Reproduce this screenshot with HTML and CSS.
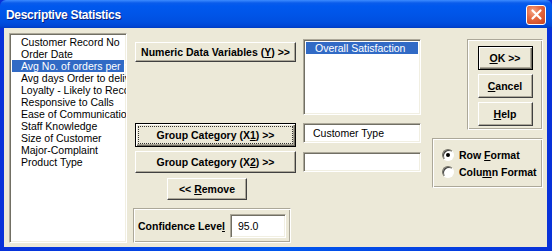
FILE: index.html
```html
<!DOCTYPE html>
<html>
<head>
<meta charset="utf-8">
<link rel="stylesheet" href="styles.css">
</head>
<body>
<div class="window">
  <div class="titlebar">
    <span class="title">Descriptive Statistics</span>
    <span class="close"><svg width="13" height="13" viewBox="0 0 13 13"><path d="M2.5 2.5 L10.5 10.5 M10.5 2.5 L2.5 10.5" stroke="#fff" stroke-width="2.2" stroke-linecap="round"/></svg></span>
  </div>
  <div class="content">
    <div class="col col-a">
      <div class="listbox vars">
        <div class="item">Customer Record No</div>
        <div class="item">Order Date</div>
        <div class="item sel">Avg No. of orders per month</div>
        <div class="item">Avg days Order to delivery</div>
        <div class="item">Loyalty - Likely to Recommend</div>
        <div class="item">Responsive to Calls</div>
        <div class="item">Ease of Communications</div>
        <div class="item">Staff Knowledge</div>
        <div class="item">Size of Customer</div>
        <div class="item">Major-Complaint</div>
        <div class="item">Product Type</div>
      </div>
    </div>
    <div class="col col-b">
      <div class="btn btn-numeric"><span>Numeric Data Variables (<u>Y</u>) &gt;&gt;</span></div>
      <div class="btn btn-x1 focus"><span>Group Category (X<u>1</u>) &gt;&gt;</span></div>
      <div class="btn btn-x2"><span>Group Category (X<u>2</u>) &gt;&gt;</span></div>
      <div class="btn btn-remove"><span>&lt;&lt; <u>R</u>emove</span></div>
      <div class="frame conf">
        <span class="label">Confidence Leve<u>l</u></span>
        <div class="textbox conf-box">95.0</div>
      </div>
    </div>
    <div class="col col-c">
      <div class="listbox out">
        <div class="item sel">Overall Satisfaction</div>
      </div>
      <div class="textbox tb1">Customer Type</div>
      <div class="textbox tb2"></div>
    </div>
    <div class="col col-d">
      <div class="frame actions">
        <div class="btn act default"><span><u>O</u>K &gt;&gt;</span></div>
        <div class="btn act"><span><u>C</u>ancel</span></div>
        <div class="btn act"><span><u>H</u>elp</span></div>
      </div>
      <div class="frame format">
        <div class="radio-row"><span class="radio on"></span><span class="rl">Row <u>F</u>ormat</span></div>
        <div class="radio-row"><span class="radio"></span><span class="rl">Colu<u>m</u>n Format</span></div>
      </div>
    </div>
  </div>
</div>
</body>
</html>
```

FILE: styles.css
```css
* { box-sizing: border-box; }
html, body { margin: 0; padding: 0; }
body { width: 552px; height: 251px; overflow: hidden; background: #0831D9; }

.window {
  width: 552px;
  height: 251px;
  display: flex;
  flex-direction: column;
  background: linear-gradient(to right, #0831D9, #0058EE 50%, #0831D9);
  font-family: "Liberation Sans", Arial, sans-serif;
  font-size: 10.5px;
  color: #000;
}

.titlebar {
  height: 28px;
  flex: none;
  display: flex;
  align-items: center;
  justify-content: space-between;
  padding: 0 6px 0 6px;
  background: linear-gradient(to bottom, #3D8BFF 0, #0A5CEB 3px, #0058EE 6px, #0055E8 14px, #004FE0 22px, #0046D5 26px, #003CC2 28px);
  border-radius: 6px 6px 0 0;
}
.title {
  color: #fff;
  font-weight: bold;
  font-size: 12px;
  letter-spacing: -0.3px;
  text-shadow: 1px 1px 0 #0A1E7A;
  margin-top: 1px;
}
.close {
  width: 20px;
  height: 20px;
  margin-top: 1px;
  border: 1px solid #fff;
  border-radius: 3px;
  background: radial-gradient(circle at 35% 30%, #F5A585 0, #E56B43 40%, #C8401B 100%);
  display: flex;
  align-items: center;
  justify-content: center;
}

.content {
  flex: 1;
  margin: 0 5px 4px 4px;
  background: #ECE9D8;
  display: flex;
  align-items: flex-start;
}

.col { display: flex; flex-direction: column; align-items: flex-start; }
.col-a { width: 118px; margin: 5px 0 0 5px; }
.col-b { width: 163px; margin-left: 6px; }
.col-c { width: 118px; margin-left: 7px; }
.col-d { width: 111px; margin-left: 11px; }

.listbox {
  background: #fff;
  border: 1px solid;
  border-color: #ACA899 #fff #fff #ACA899;
  box-shadow: inset 1px 1px #716F64, inset -1px -1px #F1EFE2;
  padding: 2px 2px;
  overflow: hidden;
  white-space: nowrap;
}
.vars { width: 118px; height: 210px; padding-top: 2px; }
.out { width: 118px; height: 76px; margin-top: 11px; }
.item { height: 12px; line-height: 12px; padding-left: 9px; }
.item.sel { background: #316AC5; color: #fff; }

.btn {
  background: #ECE9D8;
  border: 1px solid;
  border-color: #fff #404040 #404040 #fff;
  box-shadow: inset -1px -1px #ACA899;
  font-weight: bold;
  display: flex;
  align-items: center;
  justify-content: center;
  white-space: nowrap;
}
.btn.focus, .btn.default {
  border: 1px solid #000;
  box-shadow: inset 1px 1px #fff, inset -1px -1px #716F64, inset -2px -2px #ACA899;
}
.btn.focus { outline: 1px dotted #333; outline-offset: -4px; }

.btn-numeric { width: 161px; height: 20px; margin: 14px 0 0 2px; }
.btn-x1 { width: 161px; height: 24px; margin: 61px 0 0 2px; }
.btn-x2 { width: 161px; height: 22px; margin: 4px 0 0 2px; }
.btn-remove { width: 80px; height: 22px; margin: 5px 0 0 34px; }

.frame {
  border: 1px solid;
  border-color: #ACA899 #fff #fff #ACA899;
  box-shadow: inset 1px 1px #fff, inset -1px -1px #ACA899;
}
.conf {
  width: 158px;
  height: 35px;
  margin-top: 8px;
  display: flex;
  align-items: center;
  padding-left: 4px;
  gap: 5px;
}
.label { font-weight: bold; white-space: nowrap; }

.textbox {
  background: #fff;
  border: 1px solid;
  border-color: #ACA899 #fff #fff #ACA899;
  box-shadow: inset 1px 1px #716F64, inset -1px -1px #F1EFE2;
  display: flex;
  align-items: center;
  padding-left: 9px;
  white-space: nowrap;
}
.conf-box { width: 56px; height: 24px; padding-left: 7px; flex: none; }
.tb1 { width: 118px; height: 20px; margin-top: 8px; }
.tb2 { width: 118px; height: 20px; margin-top: 9px; }

.actions {
  width: 76px;
  height: 91px;
  margin: 11px 0 0 35px;
  display: flex;
  flex-direction: column;
  align-items: center;
  padding-top: 6px;
  gap: 4px;
}
.act { width: 55px; height: 24px; }

.format {
  width: 111px;
  height: 50px;
  margin-top: 8px;
  display: flex;
  flex-direction: column;
  justify-content: center;
  padding-left: 9px;
  gap: 4px;
}
.radio-row { display: flex; align-items: center; gap: 5px; font-weight: bold; height: 13px; white-space: nowrap; }
.radio {
  width: 12px;
  height: 12px;
  flex: none;
  border-radius: 50%;
  background: #fff;
  border: 1px solid;
  border-color: #716F64 #fff #fff #716F64;
  box-shadow: inset 1px 1px #404040;
  display: flex;
  align-items: center;
  justify-content: center;
}
.radio.on::after {
  content: "";
  width: 4px;
  height: 4px;
  border-radius: 50%;
  background: #000;
}
```
